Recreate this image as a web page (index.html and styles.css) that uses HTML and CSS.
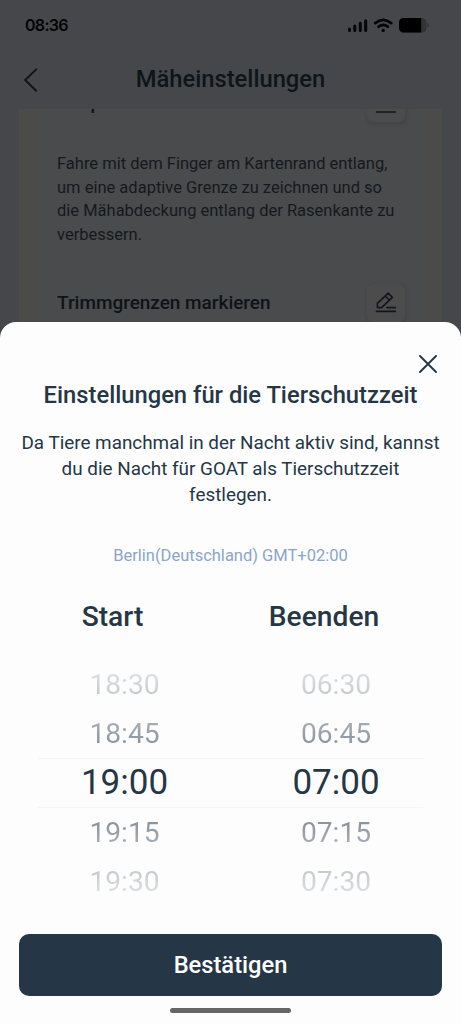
FILE: index.html
```html
<!DOCTYPE html>
<html lang="de">
<head>
<meta charset="utf-8">
<meta name="viewport" content="width=device-width, initial-scale=1">
<title>Mäheinstellungen</title>
<link rel="stylesheet" href="styles.css">
</head>
<body>
<div class="phone">
  <div class="screen">
    <div class="status">
      <span class="clock">08:36</span>
      <svg class="status-icons" width="84" height="18" viewBox="0 0 84 18">
        <g stroke="#050607" stroke-width="3" stroke-linecap="round">
          <path d="M3.5 13v1.4M8.8 10v4.4M14.3 7.3v7.1M19.7 4.7v9.7"/>
        </g>
        <g fill="none" stroke="#050607" stroke-width="2.7" stroke-linecap="round">
          <path d="M29.2 7.1Q37.2 0.7 45.2 7.1M32.6 10.7Q37.2 7.3 41.8 10.7"/>
        </g>
        <circle cx="37.2" cy="14.4" r="1.7" fill="#050607"/>
        <rect x="53" y="2" width="27.5" height="14.6" rx="4.5" fill="#333437"/>
        <path d="M57.5 2H75.2V16.6H57.5A4.5 4.5 0 0 1 53 12.1V6.5A4.5 4.5 0 0 1 57.5 2Z" fill="#000"/>
        <path d="M81.5 7Q83 7.5 83 9.3T81.5 11.6Z" fill="#333437"/>
      </svg>
    </div>
    <div class="navbar">
      <svg class="back" width="15" height="26" viewBox="0 0 15 26"><path d="M12.2 2.4L1.2 13L12.2 23.8" fill="none" stroke="#111519" stroke-width="2" stroke-linecap="round" stroke-linejoin="round"/></svg>
      <h1 class="nav-title">Mäheinstellungen</h1>
    </div>
    <div class="content">
      <div class="card">
        <div class="row row-top">
          <h2 class="row-title">Adaptive Grenze einstellen</h2>
          <span class="edit"><svg width="22" height="22" viewBox="0 0 22 22"><g fill="none" stroke="#12161c" stroke-width="1.6" stroke-linejoin="round" stroke-linecap="round"><path d="M2.4 15.6V11.3L13.2 1.2L17.4 5.4L6.6 15.6ZM10.2 4L14.5 8.3M11.8 15.6H20.4M1.5 20H20.4"/></g></svg></span>
        </div>
        <p class="hint">Fahre mit dem Finger am Kartenrand entlang,<br>um eine adaptive Grenze zu zeichnen und so<br>die Mähabdeckung entlang der Rasenkante zu<br>verbessern.</p>
        <div class="row row-trim">
          <h2 class="row-title">Trimmgrenzen markieren</h2>
          <span class="edit"><svg width="22" height="22" viewBox="0 0 22 22"><g fill="none" stroke="#12161c" stroke-width="1.6" stroke-linejoin="round" stroke-linecap="round"><path d="M2.4 15.6V11.3L13.2 1.2L17.4 5.4L6.6 15.6ZM10.2 4L14.5 8.3M11.8 15.6H20.4M1.5 19.4H20.4"/></g></svg></span>
        </div>
      </div>
    </div>
  </div>
  <div class="sheet">
    <div class="sheet-bar">
      <svg width="20" height="20" viewBox="0 0 20 20"><path d="M2 2L18 18M18 2L2 18" fill="none" stroke="#253746" stroke-width="1.9" stroke-linecap="round"/></svg>
    </div>
    <h2 class="sheet-title">Einstellungen für die Tierschutzzeit</h2>
    <p class="sheet-text">Da Tiere manchmal in der Nacht aktiv sind, kannst<br>du die Nacht für GOAT als Tierschutzzeit<br>festlegen.</p>
    <p class="zone">Berlin(Deutschland) GMT+02:00</p>
    <div class="heads"><span class="head-start">Start</span><span class="head-end">Beenden</span></div>
    <div class="picker">
      <div class="line far top"><span>18:30</span><span>06:30</span></div>
      <div class="line near top"><span>18:45</span><span>06:45</span></div>
      <div class="line current"><span>19:00</span><span>07:00</span></div>
      <div class="line near bottom"><span>19:15</span><span>07:15</span></div>
      <div class="line far bottom"><span>19:30</span><span>07:30</span></div>
    </div>
    <button class="confirm">Bestätigen</button>
    <div class="home"></div>
  </div>
</div>
</body>
</html>
```
FILE: styles.css
```css
* { box-sizing: border-box; }
body { margin: 0; font-family: Roboto, "Liberation Sans", sans-serif; background: #fdfdfd; }
h1, h2, p { margin: 0; font-weight: 500; }
svg { display: block; }
.phone { width: 461px; height: 1024px; overflow: hidden; }
.screen { height: 342px; display: flex; flex-direction: column; background: #46474b; overflow: hidden; }
.status { height: 50px; padding: 0 31px 0 25px; display: flex; align-items: center; justify-content: space-between; }
.clock { font: 600 16px/50px Inter, sans-serif; letter-spacing: -0.7px; color: #030405; }
.navbar { height: 59px; padding: 0 24px; display: grid; grid-template-columns: 15px 1fr 15px; align-items: center; }
.nav-title { font-size: 23.75px; line-height: 59px; text-align: center; color: #0e1519; }
.content { flex: 1; margin: 0 19px; padding: 0 19px; background: #4b4b4a; overflow: hidden; }
.card { height: 100%; padding: 0 18.5px 0 19px; background: #4a4b4c; overflow: hidden; }
.row { display: flex; justify-content: space-between; align-items: center; height: 38px; }
.row-top { margin-top: -25px; }
.row-title { font-size: 18.95px; line-height: 38px; color: #0e1318; }
.edit { width: 38px; height: 38px; display: grid; place-items: center; border-radius: 6px; background: #4c4c4c; box-shadow: 1px 2px 4px rgba(20, 25, 40, .18); }
.hint { margin-top: 30px; font-size: 16.5px; font-weight: 400; line-height: 23.7px; color: #15191e; white-space: nowrap; }
.row-trim { margin-top: 37px; }
.sheet { height: 702px; margin-top: -20px; padding: 0 19px; position: relative; border-radius: 16px 16px 0 0; background: #fdfdfd; color: #253746; display: flex; flex-direction: column; }
.sheet-bar { padding: 32px 4px 0 0; height: 57px; display: flex; justify-content: flex-end; }
.sheet-title { font-size: 23.75px; line-height: 32px; text-align: center; white-space: nowrap; }
.sheet-text { margin-top: 19px; font-size: 18.87px; font-weight: 400; line-height: 26px; text-align: center; white-space: nowrap; }
.zone { margin-top: 38px; font-size: 16.5px; font-weight: 400; line-height: 20px; text-align: center; color: #8ca5ca; }
.heads { margin-top: 31px; display: grid; grid-template-columns: 187px 212px; font-size: 28.2px; font-weight: 500; line-height: 40px; text-align: center; }
.head-end { padding-left: 24px; }
.picker { margin: 23px 19px 0; }
.line { height: 49.2px; display: grid; grid-template-columns: 173px 250px; font-size: 28.2px; line-height: 49px; text-align: center; }
.line span { background-clip: text; color: transparent; }
.far.top span { background-image: linear-gradient(#dddfe2 25%, #c4c9ce 75%); }
.near.top span { background-image: linear-gradient(#a8afb6 25%, #88929b 75%); }
.near.bottom span { background-image: linear-gradient(#88929b 25%, #a8afb6 75%); }
.far.bottom span { background-image: linear-gradient(#c4c9ce 25%, #dddfe2 75%); }
.line.current { border-top: 1px solid #f5f5f5; border-bottom: 1px solid #f5f5f5; font-size: 35px; line-height: 48px; }
.line.current span { color: #253746; }
.confirm { margin-top: 28.5px; height: 61.5px; flex: none; border: 0; border-radius: 10px; background: #253746; color: #fdfdfd; font: 500 23.7px/61px Roboto, sans-serif; padding: 0; }
.home { width: 121px; height: 5px; margin: 12px auto 0; border-radius: 3px; background: #666; }
```
